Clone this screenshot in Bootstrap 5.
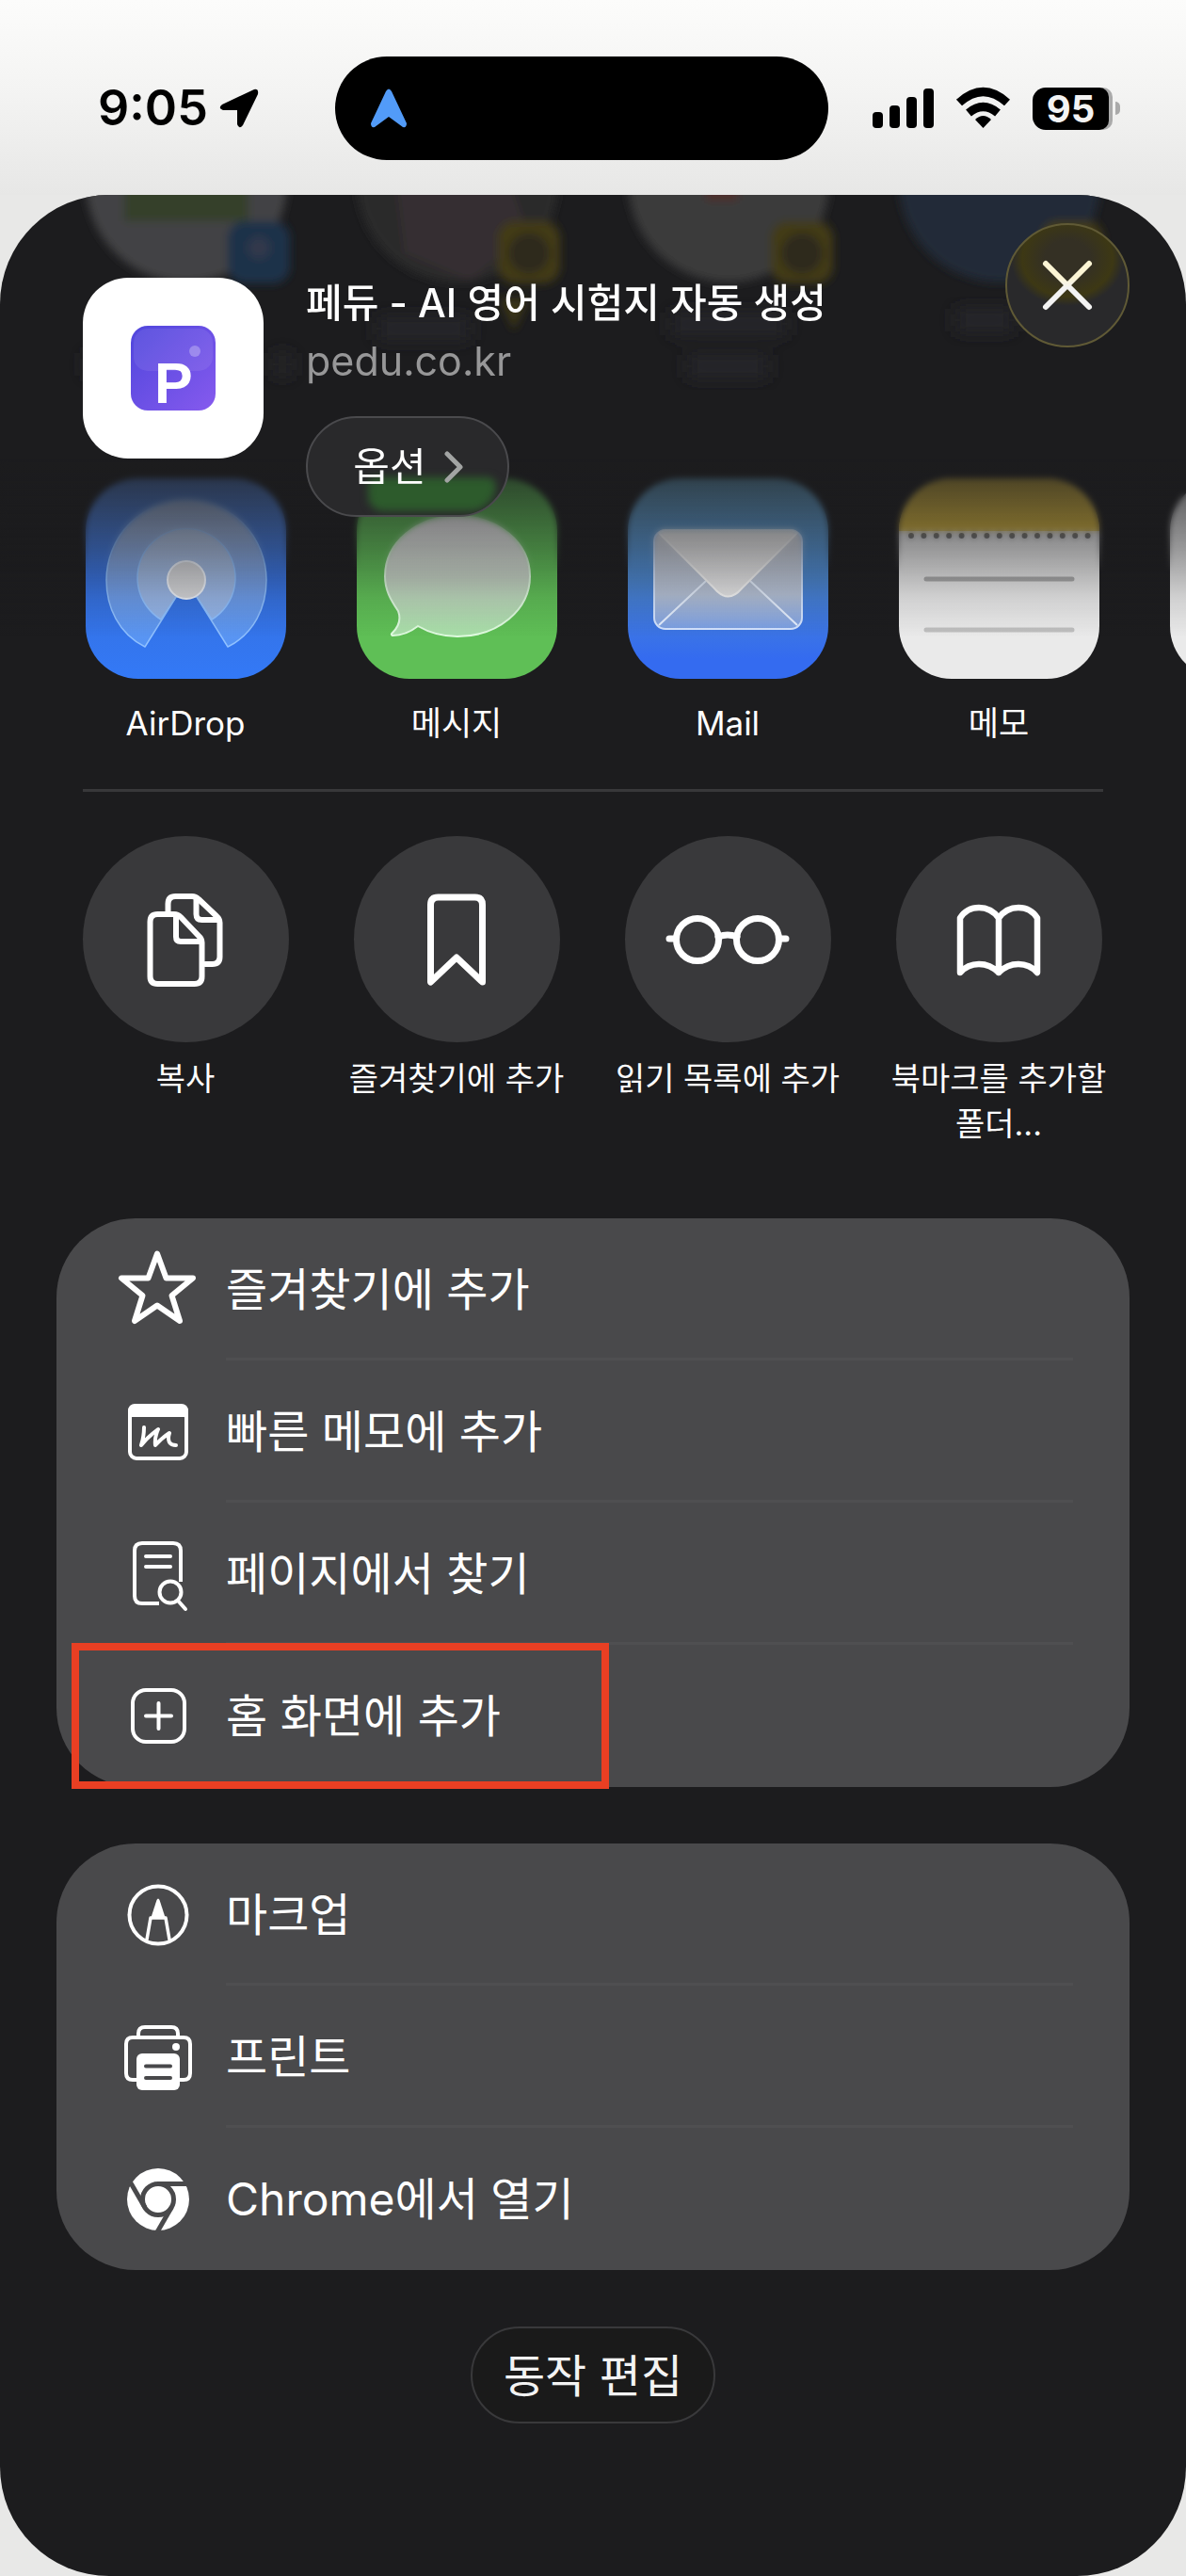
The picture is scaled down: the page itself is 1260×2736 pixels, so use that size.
<!DOCTYPE html>
<html lang="ko">
<head>
<meta charset="utf-8">
<meta name="viewport" content="width=device-width, initial-scale=1">
<title>페듀 - AI 영어 시험지 자동 생성</title>
<link href="https://cdn.jsdelivr.net/npm/bootstrap@5.3.0/dist/css/bootstrap.min.css" rel="stylesheet">
<style>
body{font-family:Inter,"Noto Sans CJK KR",sans-serif;background:#e8e8e7;color:#fff;overflow-x:hidden}
svg{display:block;flex:none;overflow:visible}
button{font-family:inherit;color:inherit}
.status-bar{height:207px;padding:60px 70px 0 104px;background:linear-gradient(#fcfcfb,#f4f4f3 45%,#e7e7e6);color:#000}
.status-left{width:253px;height:110px;gap:12px}
.clock-text{font-size:52px;font-weight:600;line-height:64px}
.island{width:525px;height:110px;border-radius:55px;background:#000;padding-left:38px}
.status-right{height:110px;margin-left:47px}
.battery{width:81px;height:45px;border-radius:14px 10px 10px 14px;background:#000;box-shadow:4px 0 0 #aaa;color:#f3f3f3;font-size:40px;font-weight:700;line-height:45px}
.battery-tip{width:5px;height:14px;border-radius:0 7px 7px 0;background:#aaa;margin-left:7px}
.sheet{background:#1c1c1e;border-radius:116px;min-height:2529px;overflow:hidden;isolation:isolate}
.behind{position:absolute;top:0;left:0;z-index:-1}
.sheet-head{z-index:2;padding:30px 60px 0 88px}
.fog,.fog-blur{position:absolute;left:0;right:0;top:280px;z-index:1;pointer-events:none}
.fog{height:190px;background:linear-gradient(rgba(28,28,30,.76),rgba(28,28,30,.72) 12%,rgba(28,28,30,.4) 50%,rgba(28,28,30,.12) 78%,rgba(28,28,30,0))}
.fog-blur{height:121px;backdrop-filter:blur(3px);-webkit-mask-image:linear-gradient(#000 40%,transparent);mask-image:linear-gradient(#000 40%,transparent)}
.site-tile{width:192px;height:192px;border-radius:48px;background:#fff;margin:58px 45px 0 0}
.site-info{padding-top:54px}
.site-title{font-size:42px;font-weight:500;line-height:62px;margin:0}
.site-host{font-size:43px;line-height:60px;color:#979798}
.option-btn{width:216px;height:107px;margin-top:29px;border-radius:54px;border:2px solid #4a4a4d;background:#29292b;font-size:42px;gap:20px;isolation:isolate;overflow:hidden}
.option-btn::before{content:"";position:absolute;z-index:-1;right:12px;bottom:4px;width:136px;height:36px;border-radius:10px 10px 30px 18px;background:#2d5b2c;filter:blur(4px)}
.close-btn{width:132px;height:132px;border-radius:50%;border:2px solid #605a36;background:radial-gradient(ellipse 60px 50px at 50% 28%,#343024 40%,#3d3814 80%,#29292b)}
.tiles-row{padding-left:53px;overflow:hidden}
.app-row{margin-top:-41px}
.tile-item{flex:0 0 288px;font-size:34px;line-height:48px;text-align:center;border:0;background:none;padding:0}
.app-name{margin-top:23px;font-size:35px}
.app-tile{width:213px;height:213px;border-radius:56px;overflow:hidden}
.rule{height:3px;background:#38383a;margin:46px 88px 47px}
.round-tile{width:219px;height:219px;border-radius:50%;background:#39393b}
.act-name{margin-top:15px;width:240px;word-break:keep-all}
.act-group{--bs-list-group-border-radius:84px;margin:60px 60px 0}
.act-first{margin-top:76px}
.act-group .list-group-item{padding:0 60px 0 68px;gap:32px;font-size:48px;line-height:72px;color:#fff;background:#49494b;border:0}
.act-text{height:151px;padding-top:4px;border-bottom:3px solid #4f4f51}
.list-group-item:last-child .act-text{border-color:transparent}
.red-frame{position:absolute;z-index:3;left:16px;top:-2px;width:571px;height:155px;border:8px solid #e93f23;pointer-events:none}
.foot-row{margin-top:60px}
.edit-btn{height:103px;padding:2px 33px 0;border-radius:52px;border:2px solid #39393b;background:#1a1a1a;font-size:48px;color:#f3f3f3}
.ln{fill:none;stroke:#fff;stroke-linecap:round;stroke-linejoin:round}
.ln-grey{stroke:#a2a4a3}
.ln-butt{stroke-linecap:butt}
</style>
</head>
<body>
<header class="status-bar d-flex align-items-start">
  <div class="status-left d-flex align-items-center">
    <span class="clock-text">9:05</span>
    <svg width="42" height="42" viewBox="0 0 42 42"><path d="M3 17 37 1q5-1 4 5L25 39q-4 5-6-1V23H4q-6-2-1-6z"/></svg>
  </div>
  <div class="island d-flex align-items-center"><svg width="38" height="42" viewBox="0 0 38 42"><path d="M16 3q3-5 6 0l16 34q0 5-4 4L19 30 4 41q-4 1-4-4z" fill="#529bf8"/></svg></div>
  <div class="status-right d-flex align-items-center">
    <svg width="65" height="42" viewBox="0 0 65 42"><rect y="25" width="11" height="17" rx="4"/><rect x="18" y="18" width="11" height="24" rx="4"/><rect x="36" y="9" width="11" height="33" rx="4"/><rect x="54" width="11" height="42" rx="4"/></svg>
    <svg class="mx-4" width="57" height="42" viewBox="0 0 57 42"><path d="M3 15Q28.500-8 54 15M13 26q15.500-13 31 0" fill="none" stroke="#000" stroke-width="9"/><path d="M20 33q8.500-8 17 0l-8.500 9z"/></svg>
    <span class="battery text-center">95</span><span class="battery-tip"></span>
  </div>
</header>

<main class="sheet position-relative">
  <!-- contacts scrolled under the frosted header -->
  <svg class="behind" width="1260" height="240" viewBox="0 0 1260 240" aria-hidden="true">
    <defs><filter id="soft" x="-20%" y="-20%" width="140%" height="140%"><feGaussianBlur stdDeviation="5"/></filter><filter id="softer" x="-20%" y="-50%" width="140%" height="200%"><feGaussianBlur stdDeviation="9"/></filter></defs>
    <g filter="url(#soft)">
      <circle cx="198" cy="-14" r="107" fill="#434344"/><rect x="132" y="-30" width="132" height="58" fill="#35402a"/>
      <rect x="242" y="28" width="66" height="66" rx="18" fill="#1f3049"/><circle cx="275" cy="56" r="12" fill="#30394c"/>
      <circle cx="486" cy="-14" r="107" fill="#2b2b2b"/><path d="M420-20h120l20 60-60 52-70-30z" fill="#352f30"/>
      <rect x="529" y="28" width="66" height="66" rx="18" fill="#423b12"/><circle cx="562" cy="62" r="22" fill="#2f2b1b"/>
      <circle cx="774" cy="-14" r="107" fill="#3a3a3b"/><rect x="750" y="-30" width="34" height="36" fill="#4d2e29"/>
      <rect x="819" y="28" width="66" height="66" rx="18" fill="#423b12"/><circle cx="852" cy="62" r="22" fill="#2f2b1b"/>
      <circle cx="1062" cy="-14" r="107" fill="#202a38"/><rect x="1106" y="28" width="66" height="66" rx="18" fill="#423b12"/>
      <path d="M530 110h32l-16 34z" fill="#3b3417"/>
    </g>
    <path filter="url(#softer)" d="M90 180h60M290 180h20M400 142h100M712 137h124M730 182h86M1015 133h62" stroke="#272729" stroke-width="24"/>
  </svg>
  <div class="fog-blur"></div><div class="fog"></div>

  <section class="sheet-head position-relative d-flex align-items-start">
    <div class="site-tile d-flex align-items-center justify-content-center flex-shrink-0">
      <svg width="90" height="90" viewBox="0 0 90 90" role="img" aria-label="페듀">
        <defs><linearGradient id="pg" x1="0" y1="0" x2="1" y2="1"><stop stop-color="#4f46dc"/><stop offset="1" stop-color="#865aee"/></linearGradient></defs>
        <rect width="90" height="90" rx="18" fill="url(#pg)"/><rect x="3" y="3" width="84" height="45" rx="15" fill="#fff" opacity=".08"/><circle cx="68" cy="27" r="6" fill="#fff" opacity=".28"/>
        <text x="25" y="82" font-family="Liberation Sans,sans-serif" font-weight="700" font-size="61" fill="#fff">P</text>
      </svg>
    </div>
    <div class="site-info">
      <h1 class="site-title">페듀 - AI 영어 시험지 자동 생성</h1>
      <div class="site-host">pedu.co.kr</div>
      <button type="button" class="option-btn position-relative d-flex align-items-center justify-content-center">옵션
        <svg width="18" height="32" viewBox="0 0 18 32"><path class="ln ln-grey" d="M2 2l14 14L2 30" stroke-width="5"/></svg>
      </button>
    </div>
    <button type="button" class="close-btn ms-auto d-flex align-items-center justify-content-center p-0" aria-label="닫기">
      <svg width="52" height="52" viewBox="0 0 52 52"><defs><linearGradient id="xg" gradientUnits="userSpaceOnUse" x1="0" y1="0" x2="0" y2="52"><stop offset=".35" stop-color="#fcf5d4"/><stop offset=".55" stop-color="#f3f3f3"/></linearGradient></defs><path d="M3 3l46 46M49 3L3 49" stroke="url(#xg)" stroke-width="6" stroke-linecap="round"/></svg>
    </button>
  </section>

  <section class="tiles-row app-row d-flex">
    <button type="button" class="tile-item d-flex flex-column align-items-center">
      <span class="app-tile"><svg width="213" height="213" viewBox="0 0 213 213">
        <defs><linearGradient id="ab" x1="0" y1="0" x2="0" y2="1"><stop stop-color="#4f7cc8"/><stop offset=".5" stop-color="#356fdc"/><stop offset="1" stop-color="#3379f7"/></linearGradient><linearGradient id="aw" x1="0" y1="0" x2="0" y2="1"><stop offset=".2" stop-color="#d9d9d9" stop-opacity=".55"/><stop offset="1" stop-color="#7db8ff" stop-opacity=".45"/></linearGradient></defs>
        <rect width="213" height="213" fill="url(#ab)"/>
        <g stroke="#8fc0ff" stroke-width="1.500" stroke-linejoin="round"><path d="M63 179C35 165 22 137 22 108a85 85 0 0 1 170 0C192 137 179 165 151 179L118 126H96z" fill="url(#aw)"/><path d="M80 150A52 52 0 1 1 134 150L118 126H96z" fill="#cdd5e2" fill-opacity=".45"/></g>
        <circle cx="107" cy="108" r="20" fill="#d5d6d9" stroke="#eef3fb" stroke-width="2"/></svg></span>
      <span class="app-name">AirDrop</span>
    </button>
    <button type="button" class="tile-item d-flex flex-column align-items-center">
      <span class="app-tile"><svg width="213" height="213" viewBox="0 0 213 213">
        <defs><linearGradient id="mg" x1="0" y1="0" x2="0" y2="1"><stop offset=".1" stop-color="#f4f4f4"/><stop offset=".5" stop-color="#c9d6c8"/><stop offset="1" stop-color="#a6dfa6"/></linearGradient></defs>
        <rect width="213" height="213" fill="#5fbf56"/>
        <path d="M107 40c43 0 77 28 77 64s-34 64-77 64c-16 0-30-4-42-11-9 7-18 10-27 10-2-1-1-2 0-3 7-7 9-15 6-23-8-12-14-22-14-37 0-36 34-64 77-64z" fill="url(#mg)" stroke="#e0fbe0" stroke-width="2"/></svg></span>
      <span class="app-name">메시지</span>
    </button>
    <button type="button" class="tile-item d-flex flex-column align-items-center">
      <span class="app-tile"><svg width="213" height="213" viewBox="0 0 213 213">
        <defs><linearGradient id="lb" x1="0" y1="0" x2="0" y2="1"><stop stop-color="#67a7cc"/><stop offset=".5" stop-color="#4a86d0"/><stop offset=".9" stop-color="#346bf0"/></linearGradient><linearGradient id="le" x1="0" y1="0" x2="0" y2="1"><stop stop-color="#d0d3da"/><stop offset=".65" stop-color="#b7c3d8"/><stop offset="1" stop-color="#7ba0e4"/></linearGradient></defs>
        <rect width="213" height="213" fill="url(#lb)"/>
        <rect x="28" y="55" width="157" height="105" rx="12" fill="url(#le)" stroke="#d4e4ff" stroke-width="2"/>
        <path d="M33 156l50-47M180 156l-50-47" stroke="#e6f0ff" stroke-width="2"/>
        <path d="M33 58l59 59q14.500 17 29 0l59-59q-3-3-8-3H41q-5 0-8 3z" fill="#e8e8e9" stroke="#fafafa" stroke-width="2"/></svg></span>
      <span class="app-name">Mail</span>
    </button>
    <button type="button" class="tile-item d-flex flex-column align-items-center">
      <span class="app-tile"><svg width="213" height="213" viewBox="0 0 213 213"><rect width="213" height="213" fill="#eaeaea"/><rect width="213" height="56" fill="#d8b63c"/><path d="M13 61h195" stroke="#333" stroke-width="6" stroke-linecap="round" stroke-dasharray="0 13.400"/><path d="M29 107h155" stroke="#aaa" stroke-width="5" stroke-linecap="round"/><path d="M29 161h155" stroke="#bfbfbf" stroke-width="5" stroke-linecap="round"/></svg></span>
      <span class="app-name">메모</span>
    </button>
    <button type="button" class="tile-item d-flex flex-column align-items-center" aria-label="더 보기"><span class="app-tile"><svg width="213" height="213"><rect width="213" height="213" fill="#eaeaea"/></svg></span></button>
  </section>

  <div class="rule"></div>

  <section class="tiles-row d-flex">
    <button type="button" class="tile-item d-flex flex-column align-items-center">
      <span class="round-tile d-flex align-items-center justify-content-center"><svg width="140" height="140" viewBox="0 0 140 140"><g class="ln" stroke-width="6"><path d="M51.500 40V32q0-8 8-8H77q4 0 7 3l19 18q3.500 3 3.500 7v36q0 8-8 8H91"/><path d="M81.500 26v17q0 6 6 6H105"/><path d="M32.500 51q0-8 8-8H58q4 0 7 3l19 20q3.500 3 3.500 7v36q0 8-8 8h-39q-8 0-8-8zM60 45v22q0 5 5 5h21"/></g></svg></span>
      <span class="act-name">복사</span>
    </button>
    <button type="button" class="tile-item d-flex flex-column align-items-center">
      <span class="round-tile d-flex align-items-center justify-content-center"><svg width="140" height="140" viewBox="0 0 140 140"><path class="ln" stroke-width="7" d="M42.500 115V33q0-8 8-8h39q8 0 8 8v82L70 89z"/></svg></span>
      <span class="act-name">즐겨찾기에 추가</span>
    </button>
    <button type="button" class="tile-item d-flex flex-column align-items-center">
      <span class="round-tile d-flex align-items-center justify-content-center"><svg width="140" height="140" viewBox="0 0 140 140"><g class="ln" stroke-width="7"><circle cx="38" cy="70" r="22.500"/><circle cx="102" cy="70" r="22.500"/><path d="M60 67q10-4 20 0M8 69h7M125 69h7"/></g></svg></span>
      <span class="act-name">읽기 목록에 추가</span>
    </button>
    <button type="button" class="tile-item d-flex flex-column align-items-center">
      <span class="round-tile d-flex align-items-center justify-content-center"><svg width="140" height="140" viewBox="0 0 140 140"><path class="ln" stroke-width="6.500" d="M70 47v58M70 47Q62 36 49 36T29 47v58q8-9 20-9t21 9q9-9 21-9t20 9V47Q104 36 91 36T70 47z"/></svg></span>
      <span class="act-name">북마크를 추가할 폴더...</span>
    </button>
  </section>

  <div class="act-group act-first list-group">
    <button type="button" class="list-group-item list-group-item-action d-flex align-items-center">
      <svg width="80" height="80" viewBox="0 0 80 80"><path class="ln" stroke-width="6" d="M39 1.500l9.500 26H77L54.500 46l8.500 27-24-16.500L15 73l8.500-27L1 27.500h28.500z"/></svg>
      <span class="act-text flex-grow-1 d-flex align-items-center">즐겨찾기에 추가</span>
    </button>
    <button type="button" class="list-group-item list-group-item-action d-flex align-items-center">
      <svg width="80" height="80" viewBox="0 0 80 80"><rect class="ln" x="10" y="12" width="60" height="56" rx="7" stroke-width="4"/><path d="M8 27V18q0-8 8-8h48q8 0 8 8v9q-1-3-5-3H13q-4 0-5 3z" fill="#fff"/><path class="ln" stroke-width="4" d="M25 35q0 10-3 19 7-9 18-17-4 9-3 17 6-7 15-13-2 6 0 10 2 3 7 3"/></svg>
      <span class="act-text flex-grow-1 d-flex align-items-center">빠른 메모에 추가</span>
    </button>
    <button type="button" class="list-group-item list-group-item-action d-flex align-items-center">
      <svg width="80" height="80" viewBox="0 0 80 80"><g class="ln" stroke-width="4"><path class="ln-butt" d="M41 71H23q-8 0-8-8V15q0-8 8-8h33q8 0 8 8v33"/><path d="M27 21h26M27 32h26"/><circle cx="53" cy="59" r="11.500"/><path d="M61 68l8 9"/></g></svg>
      <span class="act-text flex-grow-1 d-flex align-items-center">페이지에서 찾기</span>
    </button>
    <button type="button" class="list-group-item list-group-item-action d-flex align-items-center overflow-visible">
      <svg width="80" height="80" viewBox="0 0 80 80"><g class="ln" stroke-width="4"><rect x="13" y="12" width="55" height="55" rx="14"/><path d="M27 39.500h27M40.500 26v27"/></g></svg>
      <span class="act-text flex-grow-1 d-flex align-items-center">홈 화면에 추가</span>
      <span class="red-frame"></span>
    </button>
  </div>

  <div class="act-group list-group">
    <button type="button" class="list-group-item list-group-item-action d-flex align-items-center">
      <svg width="80" height="80" viewBox="0 0 80 80"><circle class="ln" cx="40" cy="40" r="30.500" stroke-width="4"/><path class="ln" stroke-width="3.500" d="M28 66l4-23h16l4 23"/><path d="M38.500 24q1.500-3 3 0L48 44H32z" fill="#fff"/></svg>
      <span class="act-text flex-grow-1 d-flex align-items-center">마크업</span>
    </button>
    <button type="button" class="list-group-item list-group-item-action d-flex align-items-center">
      <svg width="80" height="80" viewBox="0 0 80 80"><path class="ln" stroke-width="4" d="M19 18v-3q0-7 7-7h28q7 0 7 7v3M18 64h-5q-7 0-7-7V26q0-7 7-7h54q7 0 7 7v31q0 7-7 7h-5"/><circle cx="59" cy="29" r="4" fill="#fff"/><rect x="17" y="36" width="46" height="39" rx="6" fill="#fff"/><path d="M27 49.500h26M27 62h26" stroke="#49494b" stroke-width="4" stroke-linecap="round"/></svg>
      <span class="act-text flex-grow-1 d-flex align-items-center">프린트</span>
    </button>
    <button type="button" class="list-group-item list-group-item-action d-flex align-items-center">
      <svg width="80" height="80" viewBox="0 0 80 80"><circle cx="40" cy="40" r="33" fill="#fff"/><g fill="none" stroke="#49494b" stroke-width="5"><circle cx="40" cy="40" r="16.500"/><path d="M40 23.500h34"/><path d="M40 23.500h34" transform="rotate(120 40 40)"/><path d="M40 23.500h34" transform="rotate(240 40 40)"/></g></svg>
      <span class="act-text flex-grow-1 d-flex align-items-center">Chrome에서 열기</span>
    </button>
  </div>

  <div class="foot-row d-flex justify-content-center"><button type="button" class="edit-btn">동작 편집</button></div>
</main>
<script src="https://cdn.jsdelivr.net/npm/bootstrap@5.3.0/dist/js/bootstrap.bundle.min.js"></script>
</body>
</html>
